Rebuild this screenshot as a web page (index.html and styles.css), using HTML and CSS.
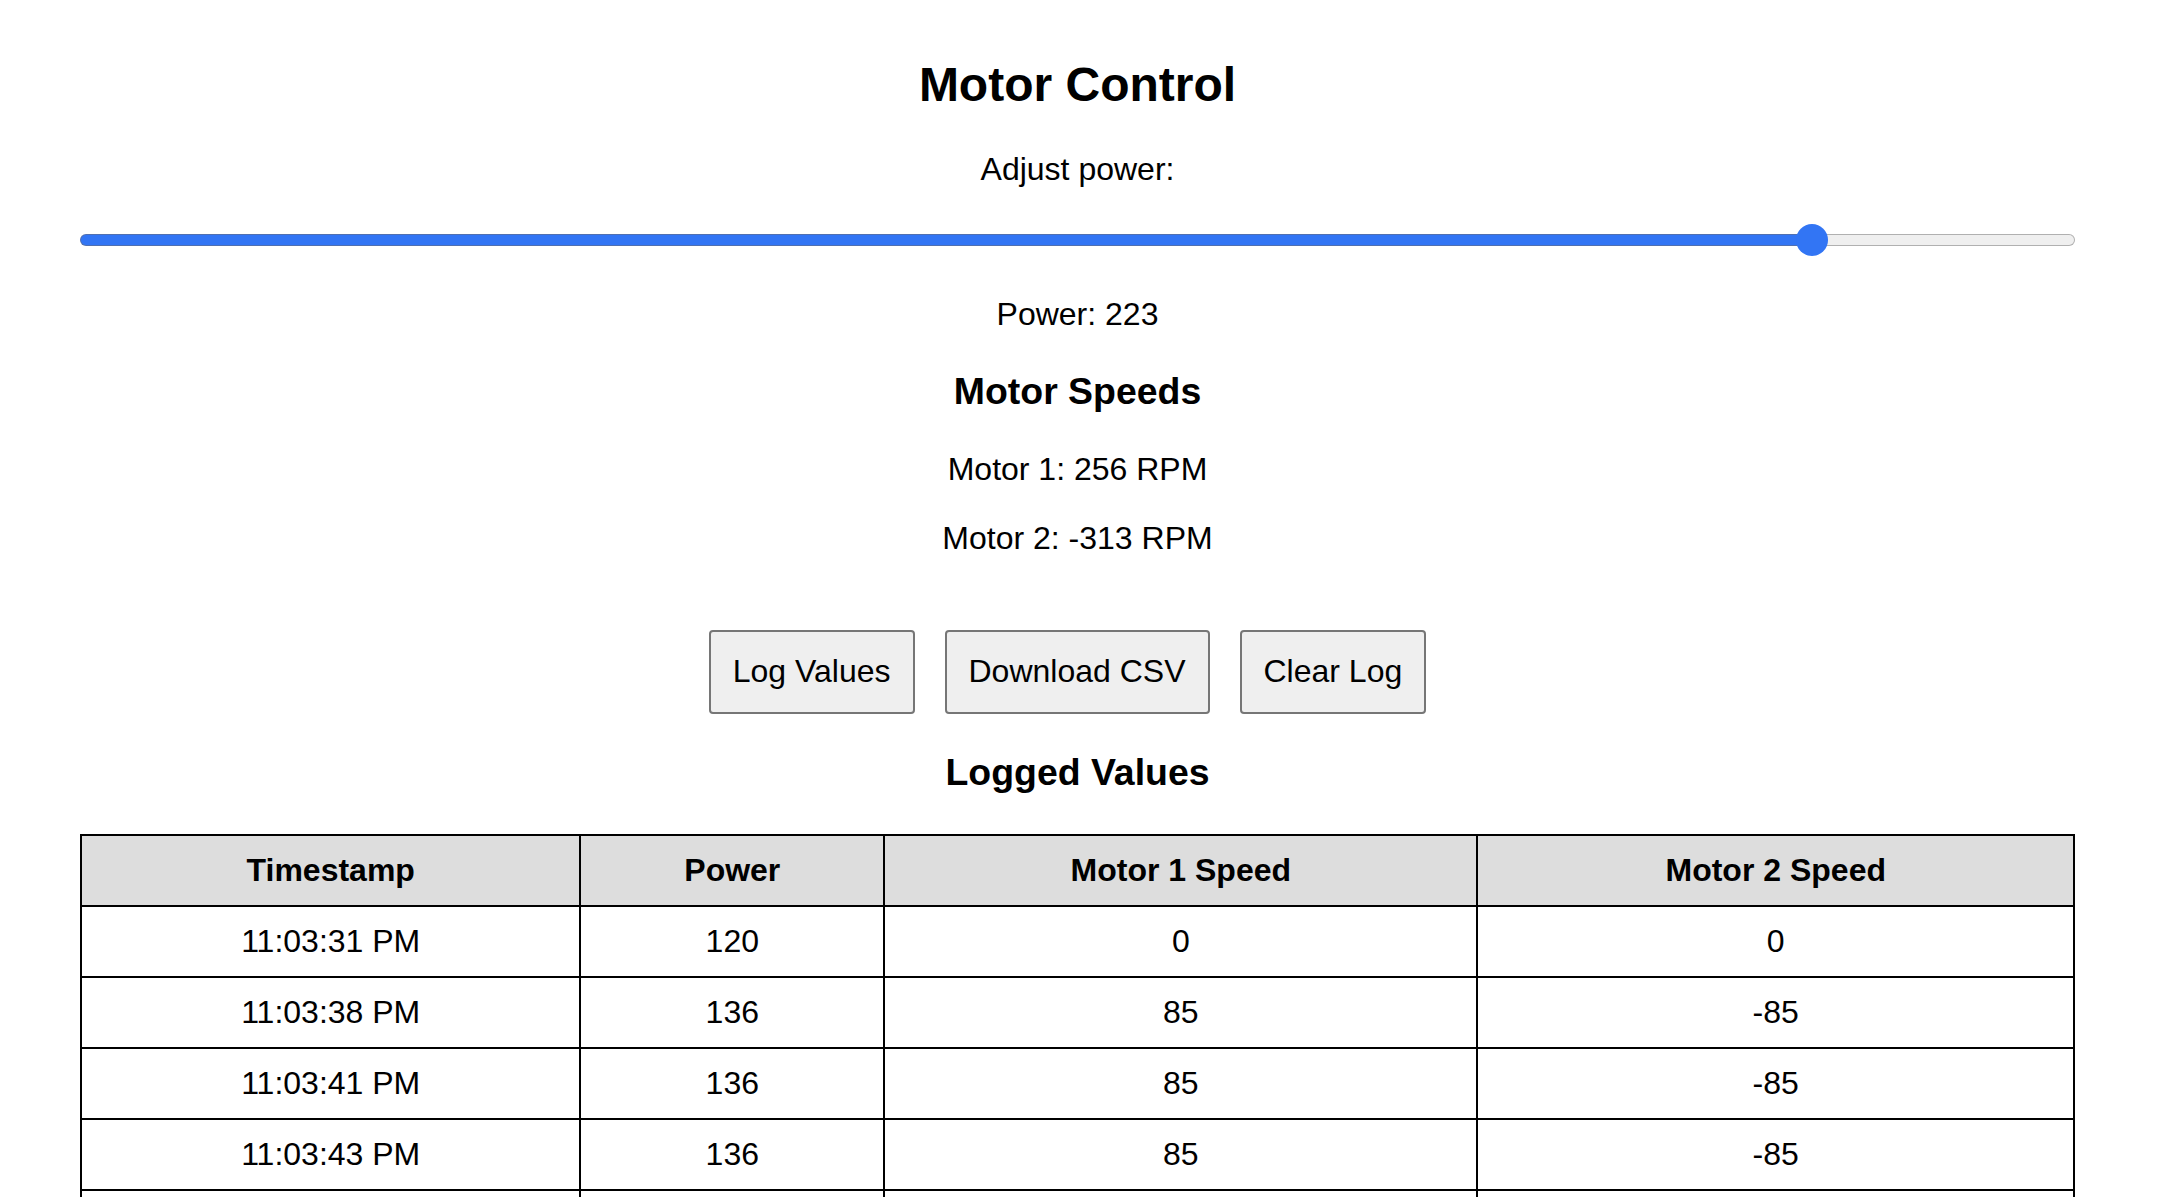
FILE: index.html
```html
<!DOCTYPE html>
<html lang="en">
<head>
<meta charset="utf-8">
<title>Motor Control</title>
<link rel="stylesheet" href="styles.css">
</head>
<body>
  <h1 class="title">Motor Control</h1>
  <p class="label">Adjust power:</p>
  <input class="slider" type="range" min="0" max="255" value="223" style="--fill: 86.85%">
  <p class="value">Power: 223</p>
  <h3 class="section">Motor Speeds</h3>
  <p class="speed">Motor 1: 256 RPM</p>
  <p class="speed">Motor 2: -313 RPM</p>
  <div class="actions">
    <button class="btn" type="button">Log Values</button>
    <button class="btn" type="button">Download CSV</button>
    <button class="btn" type="button">Clear Log</button>
  </div>
  <h3 class="section">Logged Values</h3>
  <table class="log">
    <colgroup>
      <col class="c-time">
      <col class="c-power">
      <col class="c-m1">
      <col class="c-m2">
    </colgroup>
    <thead>
      <tr><th>Timestamp</th><th>Power</th><th>Motor 1 Speed</th><th>Motor 2 Speed</th></tr>
    </thead>
    <tbody>
      <tr><td>11:03:31 PM</td><td>120</td><td>0</td><td>0</td></tr>
      <tr><td>11:03:38 PM</td><td>136</td><td>85</td><td>-85</td></tr>
      <tr><td>11:03:41 PM</td><td>136</td><td>85</td><td>-85</td></tr>
      <tr><td>11:03:43 PM</td><td>136</td><td>85</td><td>-85</td></tr>
      <tr><td>11:03:46 PM</td><td>136</td><td>85</td><td>-85</td></tr>
    </tbody>
  </table>
</body>
</html>
```
FILE: styles.css
```css
html {
  overflow: hidden;
}
body {
  margin: 0;
  padding: 0 87px 40px 80px;
  font-family: "Liberation Sans", Arial, sans-serif;
  font-size: 32px;
  line-height: normal;
  color: #000;
  background: #fff;
  text-align: center;
}
.title {
  font-size: 48px;
  font-weight: bold;
  margin: 57px 0 0;
}
.label {
  margin: 38.5px 0 0;
}
.slider {
  -webkit-appearance: none;
  appearance: none;
  display: block;
  width: 100%;
  height: 32px;
  margin: 36.7px 0 0;
  padding: 0;
  background: transparent;
}
.slider::-webkit-slider-runnable-track {
  height: 12px;
  border: 1.5px solid transparent;
  border-radius: 8px;
  background:
    linear-gradient(to right, #3275f4 var(--fill), #efefef var(--fill)) padding-box,
    linear-gradient(to right, #5170b0 var(--fill), #b0b0b0 var(--fill)) border-box;
}
.slider::-webkit-slider-thumb {
  -webkit-appearance: none;
  appearance: none;
  width: 32px;
  height: 32px;
  margin-top: -11.5px;
  border: none;
  border-radius: 50%;
  background: #3275f4;
}
.value {
  margin: 39.5px 0 0;
}
.section {
  font-size: 37.44px;
  font-weight: bold;
  margin: 37.44px 0;
}
.speed {
  margin: 32px 0;
}
.actions {
  display: flex;
  justify-content: center;
  gap: 8px;
  margin-top: 73px;
  padding-left: 2px;
}
.btn {
  font-family: "Liberation Sans", Arial, sans-serif;
  font-size: 32px;
  line-height: normal;
  color: #000;
  background: #efefef;
  border: 2px solid #767676;
  border-radius: 4px;
  padding: 21.6px 22px;
  margin: 0 22px 0 0;
}
.log {
  width: 100%;
  table-layout: fixed;
  border-collapse: collapse;
  margin-top: 40px;
}
.c-time { width: 25.06%; }
.c-power { width: 15.24%; }
.c-m1 { width: 29.77%; }
.c-m2 { width: 29.93%; }
.log th,
.log td {
  border: 2px solid #000;
  padding: 16px;
  text-align: center;
}
.log th {
  background: #dddddd;
  font-weight: bold;
}
```
